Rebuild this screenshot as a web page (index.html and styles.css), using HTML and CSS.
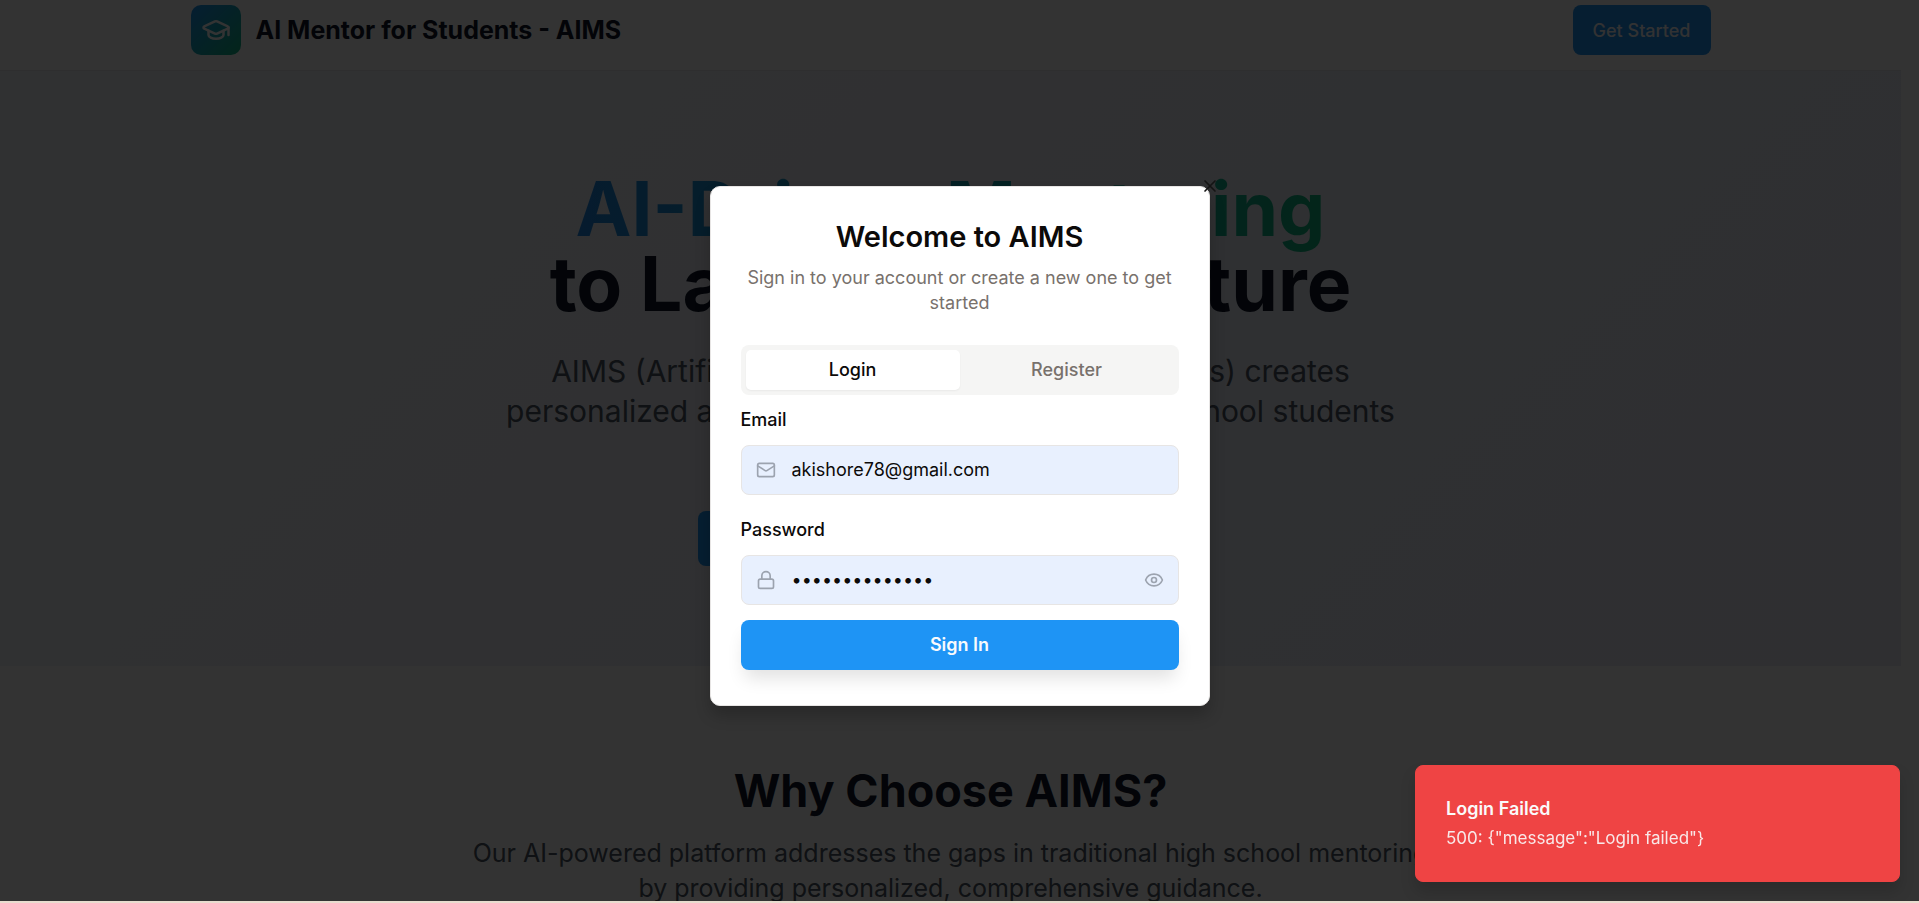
FILE: index.html
```html
<!DOCTYPE html>
<html lang="en">
<head>
<meta charset="utf-8">
<meta name="viewport" content="width=device-width, initial-scale=1">
<title>AI Mentor for Students - AIMS</title>
<link rel="stylesheet" href="styles.css">
</head>
<body>
<div class="screen">
  <div class="page">
    <header class="site-header">
      <div class="container header-row">
        <div class="brand">
          <span class="brand-mark">
            <svg viewBox="0 0 24 24" class="icon icon-cap" aria-hidden="true"><path d="M21.42 10.922a1 1 0 0 0-.019-1.838L12.83 5.18a2 2 0 0 0-1.66 0L2.6 9.08a1 1 0 0 0 0 1.832l8.57 3.908a2 2 0 0 0 1.66 0z"/><path d="M22 10v6"/><path d="M6 12.500V16a6 3 0 0 0 12 0v-3.500"/></svg>
          </span>
          <span class="brand-name">AI Mentor for Students - AIMS</span>
        </div>
        <button type="button" class="btn-primary">Get Started</button>
      </div>
    </header>
    <section class="hero">
      <h1 class="hero-title"><span class="gradient-text">AI-Driven Mentoring</span><br>to Launch Your Future</h1>
      <p class="hero-text">AIMS (Artificial Intelligence Mentor for Students) creates<br>personalized academic success plans for high school students<br>to achieve their goals.</p>
      <div class="hero-actions">
        <button type="button" class="btn-large">Start Your Journey</button>
        <button type="button" class="btn-large btn-outline">Learn More</button>
      </div>
    </section>
    <section class="why">
      <h2 class="why-title">Why Choose AIMS?</h2>
      <p class="why-text">Our AI-powered platform addresses the gaps in traditional high school mentoring<br>by providing personalized, comprehensive guidance.</p>
    </section>
  </div>
  <div class="overlay">
    <div class="dialog" role="dialog" aria-modal="true" aria-labelledby="dialog-title">
      <button type="button" class="dialog-close" aria-label="Close">
        <svg viewBox="0 0 24 24" class="icon icon-md" aria-hidden="true"><path d="M18 6 6 18M6 6l12 12"/></svg>
      </button>
      <h2 class="dialog-title" id="dialog-title">Welcome to AIMS</h2>
      <p class="dialog-text">Sign in to your account or create a new one to get started</p>
      <div class="tabs" role="tablist">
        <button type="button" role="tab" aria-selected="true" class="tab tab-active">Login</button>
        <button type="button" role="tab" aria-selected="false" class="tab">Register</button>
      </div>
      <form class="form">
        <label class="label" for="email">Email</label>
        <div class="field">
          <svg viewBox="0 0 24 24" class="icon icon-md" aria-hidden="true"><rect width="20" height="16" x="2" y="4" rx="2"/><path d="m22 7-8.970 5.700a1.940 1.940 0 0 1-2.060 0L2 7"/></svg>
          <input class="input" id="email" type="email" value="akishore78@gmail.com">
        </div>
        <label class="label" for="password">Password</label>
        <div class="field">
          <svg viewBox="0 0 24 24" class="icon icon-md" aria-hidden="true"><rect width="18" height="11" x="3" y="11" rx="2"/><path d="M7 11V7a5 5 0 0 1 10 0v4"/></svg>
          <input class="input" id="password" type="password" value="secretpassword">
          <button type="button" class="reveal" aria-label="Show password">
            <svg viewBox="0 0 24 24" class="icon icon-md" aria-hidden="true"><path d="M2.062 12.348a1 1 0 0 1 0-.696 10.750 10.750 0 0 1 19.876 0 1 1 0 0 1 0 .696 10.750 10.750 0 0 1-19.876 0"/><circle cx="12" cy="12" r="3"/></svg>
          </button>
        </div>
        <button type="submit" class="submit">Sign In</button>
      </form>
    </div>
  </div>
  <div class="toast" role="status">
    <div class="toast-title">Login Failed</div>
    <div class="toast-text">500: {"message":"Login failed"}</div>
  </div>
</div>
</body>
</html>
```
FILE: styles.css
```css
* { box-sizing: border-box; }
body, h1, h2, p { margin: 0; }
body { font-family: Inter, "Liberation Sans", sans-serif; background: #e9dccf; color: #0c0a09; overflow: hidden; }
button, input { font: inherit; }
button { border: 0; padding: 0; cursor: pointer; }

.icon { fill: none; stroke: currentColor; stroke-width: 2; stroke-linecap: round; stroke-linejoin: round; flex: none; display: block; }
.icon-md { width: 20px; height: 20px; }
.icon-cap { width: 30px; height: 30px; }

.screen { position: relative; height: calc(100vh - 2px); overflow: hidden; background: #fff; }
.page { padding-right: 18px; }
.container { max-width: 1520px; margin: 0 auto; }

.site-header { padding: 5px 0 15px; border-bottom: 1px solid #e5e7eb; }
.header-row, .brand { display: flex; align-items: center; }
.header-row { justify-content: space-between; }
.brand { gap: 15px; }
.brand-mark { display: grid; place-items: center; width: 50px; height: 50px; border-radius: 10px; color: #fff; background: linear-gradient(135deg, #1e94f5, #10b981); }
.brand-name { font-size: 25px; line-height: 35px; font-weight: 700; color: #0f172a; }
.btn-primary { height: 50px; padding: 0 20px; border-radius: 8px; background: #1e94f5; color: #f8fafc; font-size: 18px; font-weight: 500; }

.hero { padding: 100px 0; text-align: center; background: linear-gradient(135deg, #f1f5f9, #e8eaf6); }
.hero-title { font-size: 75px; line-height: 75px; font-weight: 700; color: #0f172a; margin-bottom: 30px; }
.gradient-text { background: linear-gradient(90deg, #1e88e5, #10b981); background-clip: text; color: transparent; }
.hero-text { font-size: 30px; line-height: 40px; color: #4b5563; margin-bottom: 40px; }
.hero-actions { display: flex; justify-content: center; gap: 20px; }
.btn-large { width: 243px; height: 55px; border-radius: 8px; background: #1e94f5; color: #fff; font-size: 20px; font-weight: 500; }
.btn-outline { background: #fff; color: #1e94f5; }

.why { padding: 100px 0; text-align: center; }
.why-title { font-size: 45px; line-height: 50px; font-weight: 700; color: #0f172a; margin-bottom: 20px; }
.why-text { font-size: 25px; line-height: 35px; color: #4b5563; }

.overlay { position: absolute; inset: 0; display: grid; place-items: center; background: rgb(0 0 0 / 80%); padding-bottom: 10px; }
.dialog { position: relative; width: 500px; padding: 30px 30px 35px; border: 1px solid #e7e5e4; border-radius: 10px; background: #fff; box-shadow: 0 10px 15px rgb(0 0 0 / 20%); }
.dialog-close { position: absolute; top: -11px; right: -11px; background: none; color: #141414; }
.dialog-title { font-size: 29px; line-height: 40px; font-weight: 600; text-align: center; }
.dialog-text { margin: 8px 0 30px; font-size: 18px; line-height: 25px; text-align: center; color: #78716c; }

.tabs { display: grid; grid-template-columns: 1fr 1fr; padding: 5px; height: 50px; border-radius: 8px; background: #f5f5f4; }
.tab { border-radius: 5px; background: none; color: #78716c; font-size: 18px; font-weight: 500; }
.tab-active { background: #fff; color: #0c0a09; box-shadow: 0 1px 2px rgb(0 0 0 / 5%); }

.form { display: flex; flex-direction: column; }
.label { padding: 12px 0; font-size: 18px; line-height: 26px; font-weight: 500; }
.field { display: flex; align-items: center; gap: 16px; height: 50px; padding: 0 14px; border: 1px solid #e7e5e4; border-radius: 8px; background: #e8f0fe; color: #9ca3af; }
.field + .label { padding-top: 22px; }
.input { flex: 1; min-width: 0; border: 0; padding: 0; outline: 0; background: none; color: #0c0a09; font-size: 18px; }
.reveal { background: none; color: inherit; }
.submit { height: 50px; margin-top: 15px; border-radius: 8px; background: #1e94f5; color: #f8fafc; font-size: 18px; font-weight: 600; box-shadow: 0 12px 18px -4px rgb(0 0 0 / 12%); }

.toast { position: absolute; right: 19px; bottom: 19px; width: 485px; padding: 30px; border: 1px solid #ef4444; border-radius: 8px; background: #ef4444; color: #fafafa; line-height: 25px; box-shadow: 0 10px 15px rgb(0 0 0 / 15%); }
.toast-title { font-size: 18px; font-weight: 600; margin-bottom: 5px; }
.toast-text { font-size: 17px; opacity: 0.9; }
```
